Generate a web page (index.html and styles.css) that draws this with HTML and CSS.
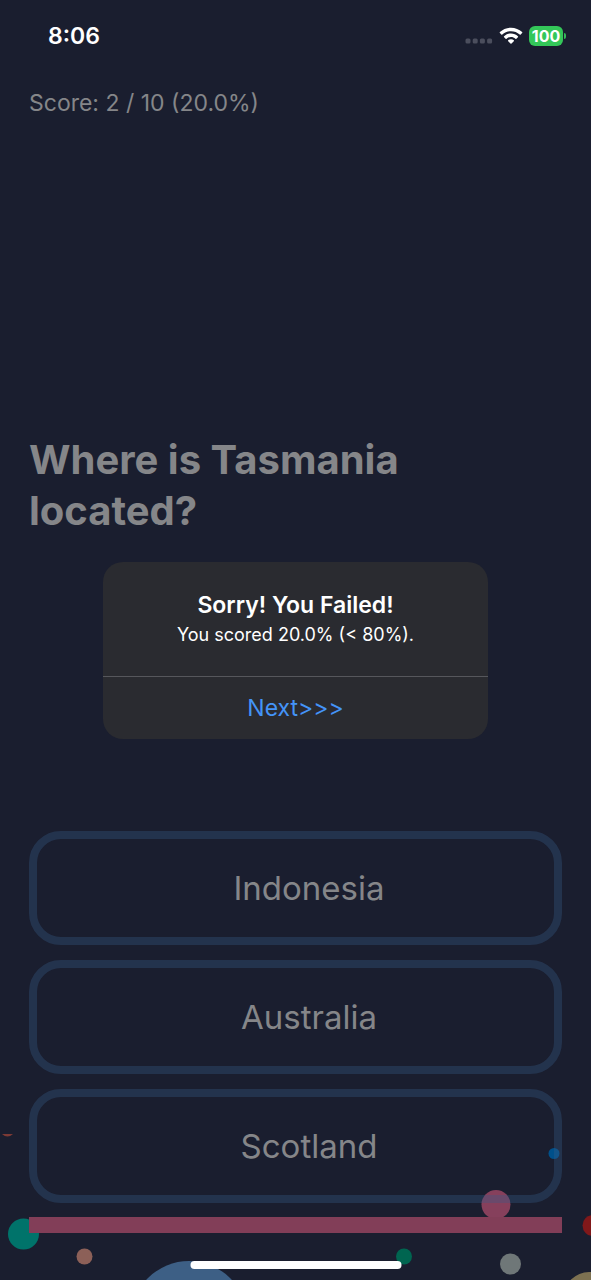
FILE: index.html
```html
<!DOCTYPE html>
<html lang="en">
<head>
  <meta charset="utf-8">
  <meta name="viewport" content="width=device-width, initial-scale=1">
  <title>Geography Quiz</title>
  <link rel="stylesheet" href="styles.css">
</head>
<body>
  <div class="app">
    <svg class="bubbles" viewBox="0 0 591 180" aria-hidden="true">
      <path d="M2 34h11q-5.500 5-11 0z" fill="#7c3a35"/>
      <circle cx="23.500" cy="134" r="15.500" fill="#00736a"/>
      <circle cx="84.500" cy="156.500" r="8" fill="#8c6058"/>
      <circle cx="189" cy="219" r="58" fill="#3d5f85"/>
      <circle cx="554" cy="53.500" r="5.500" fill="#00508a"/>
      <circle cx="496" cy="104.500" r="14.500" fill="#86405c"/>
      <circle cx="404" cy="156.500" r="8" fill="#006550"/>
      <circle cx="510.500" cy="164" r="10.500" fill="#6f7778"/>
      <circle cx="593" cy="125.500" r="10.500" fill="#80181a"/>
      <circle cx="589" cy="197" r="25" fill="#7d7151"/>
    </svg>

    <header class="status">
      <time class="status-time">8:06</time>
      <div class="status-icons">
        <svg class="signal" viewBox="0 0 28 6" aria-hidden="true">
          <rect x="0.500" y="0.500" width="5" height="5" rx="1.500"/>
          <rect x="7.700" y="0.500" width="5" height="5" rx="1.500"/>
          <rect x="14.900" y="0.500" width="5" height="5" rx="1.500"/>
          <rect x="22.100" y="0.500" width="5" height="5" rx="1.500"/>
        </svg>
        <svg class="wifi" viewBox="0 0 24 18" aria-hidden="true">
          <path d="M12 .7C7.700.700 3.800 2.300.900 5.100q-.5.500 0 1L2.300 7.500q.5.400 1 0C5.600 5.400 8.700 4.200 12 4.200s6.400 1.200 8.700 3.300q.5.400 1 0l1.400-1.400q.5-.5 0-1C20.200 2.300 16.300.700 12 .7z"/>
          <path d="M12 6.500c-2.700 0-5.100 1-6.900 2.700q-.5.500 0 1l1.500 1.500q.4.400 1 0C8.800 10.600 10.300 10 12 10s3.200.6 4.400 1.700q.6.400 1 0l1.500-1.500q.5-.5 0-1C17.100 7.500 14.700 6.500 12 6.500z"/>
          <path d="M12 12.200c-1.100 0-2.100.4-2.800 1q-.5.500 0 1l2.300 2.400q.5.500 1 0l2.300-2.400q.5-.5 0-1c-.7-.6-1.700-1-2.800-1z"/>
        </svg>
        <div class="battery"><span class="battery-level">100</span></div>
      </div>
    </header>

    <main class="quiz">
      <p class="score">Score: 2 / 10 (20.0%)</p>
      <h1 class="question">Where is Tasmania located?</h1>
      <div class="answers">
        <button class="answer" type="button">Indonesia</button>
        <button class="answer" type="button">Australia</button>
        <button class="answer" type="button">Scotland</button>
      </div>
      <div class="progress" role="progressbar" aria-label="Quiz progress" aria-valuenow="100"></div>
    </main>

    <div class="overlay">
      <section class="alert" role="alertdialog" aria-labelledby="alert-title" aria-describedby="alert-text">
        <div class="alert-body">
          <h2 class="alert-title" id="alert-title">Sorry! You Failed!</h2>
          <p class="alert-text" id="alert-text">You scored 20.0% (&lt; 80%).</p>
        </div>
        <button class="alert-action" type="button">Next&gt;&gt;&gt;</button>
      </section>
    </div>
    <div class="home-indicator"></div>
  </div>
</body>
</html>
```
FILE: styles.css
```css
* {
  box-sizing: border-box;
}

body {
  margin: 0;
  background: #1a1e2f;
  color: #858689;
  font-family: Inter, "Liberation Sans", sans-serif;
}

h1, h2, p {
  margin: 0;
}

button {
  font-family: inherit;
  cursor: pointer;
}

.app {
  position: relative;
  display: flex;
  flex-direction: column;
  min-height: 100vh;
  overflow: hidden;
}

.bubbles {
  position: absolute;
  bottom: 0;
  left: 0;
  width: 100%;
}

.status {
  display: flex;
  justify-content: space-between;
  align-items: center;
  height: 72px;
  padding: 0 25px 0 48px;
  color: #fff;
}

.status-time {
  font-size: 23px;
  font-weight: 600;
}

.status-icons {
  display: flex;
  align-items: center;
  gap: 6px;
}

.signal {
  width: 28px;
  margin-top: 10px;
  fill: #4b4e5d;
}

.wifi {
  width: 24px;
  fill: #fff;
}

.battery {
  display: flex;
  align-items: center;
  gap: 1px;
}

.battery::after {
  content: "";
  width: 2px;
  height: 6px;
  border-radius: 0 2px 2px 0;
  background: #34b858;
}

.battery-level {
  width: 34px;
  border-radius: 6px;
  background: #34c759;
  font-size: 16px;
  font-weight: 700;
  line-height: 20px;
  text-align: center;
}

.quiz {
  position: relative;
  flex: 1;
  display: flex;
  flex-direction: column;
  padding: 16px 29px 47px;
}

.score {
  font-size: 23px;
  line-height: 30px;
}

.question {
  margin: auto 0;
  padding-top: 20px;
  font-size: 40px;
  font-weight: 700;
  line-height: 51px;
}

.answers {
  display: grid;
  gap: 15px;
}

.answer {
  height: 114px;
  padding: 0 0 0 27px;
  border: 8px solid rgba(54, 92, 134, 0.35);
  border-radius: 32px;
  background: none;
  color: inherit;
  font-size: 33px;
}

.progress {
  height: 16px;
  margin-top: 14px;
  background: #823e58;
}

.overlay {
  position: absolute;
  inset: 0;
  display: flex;
  align-items: center;
  justify-content: center;
  padding: 21px 24px 0;
}

.alert {
  width: 385px;
  border-radius: 20px;
  background: #2a2b30;
  color: #fff;
  text-align: center;
  overflow: hidden;
}

.alert-body {
  padding: 27px 20px;
}

.alert-title {
  font-size: 23px;
  font-weight: 600;
  line-height: 32px;
}

.alert-text {
  font-size: 18px;
  line-height: 28px;
}

.alert-action {
  width: 100%;
  height: 63px;
  border: 0;
  border-top: 1px solid #56575c;
  background: none;
  color: #4494f8;
  font-size: 23px;
}

.home-indicator {
  position: absolute;
  bottom: 11px;
  left: 50%;
  width: 211px;
  height: 8px;
  border-radius: 4px;
  background: #fff;
  transform: translateX(-50%);
}
```
